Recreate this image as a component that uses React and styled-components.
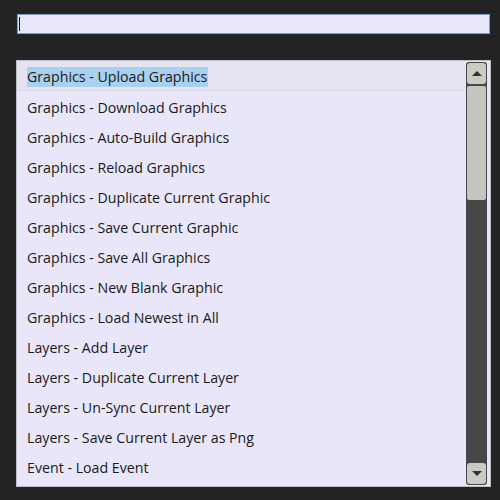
import React from "react";
import styled, { createGlobalStyle } from "styled-components";

const GlobalStyle = createGlobalStyle`
  html, body {
    margin: 0;
    padding: 0;
    background: #232323;
  }
  * {
    box-sizing: border-box;
  }
`;

const commands = [
  "Graphics - Upload Graphics",
  "Graphics - Download Graphics",
  "Graphics - Auto-Build Graphics",
  "Graphics - Reload Graphics",
  "Graphics - Duplicate Current Graphic",
  "Graphics - Save Current Graphic",
  "Graphics - Save All Graphics",
  "Graphics - New Blank Graphic",
  "Graphics - Load Newest in All",
  "Layers - Add Layer",
  "Layers - Duplicate Current Layer",
  "Layers - Un-Sync Current Layer",
  "Layers - Save Current Layer as Png",
  "Event - Load Event",
];

const App = () => {
  return (
    <>
      <GlobalStyle />
      <Page>
        <SearchBox>
          <Caret />
        </SearchBox>
        <ListBox>
          <Items>
            {commands.map((item, i) => (
              <Row key={item} $active={i === 0}>
                {i === 0 ? <Selected>{item}</Selected> : item}
              </Row>
            ))}
          </Items>
          <ScrollTrack>
            <ScrollButton>
              <Arrow />
            </ScrollButton>
            <Thumb />
            <Spacer />
            <ScrollButton>
              <Arrow $down />
            </ScrollButton>
          </ScrollTrack>
        </ListBox>
      </Page>
    </>
  );
};

const Page = styled.div`
  width: 500px;
  height: 500px;
  padding: 13px 9px 0 16px;
  display: flex;
  flex-direction: column;
  gap: 25px;
  font-family: "Open Sans", "Noto Sans", sans-serif;
`;

const SearchBox = styled.div`
  height: 22px;
  width: 475px;
  background: #e8e8fa;
  border: 1px solid #1a2a3c;
  box-shadow: inset 0 0 0 1px #7f9cc6;
  display: flex;
  align-items: center;
  padding-left: 2px;
`;

const Caret = styled.div`
  width: 1px;
  height: 14px;
  background: #111;
`;

const ListBox = styled.div`
  width: 475px;
  height: 427px;
  background: #e8e6f8;
  border: 1px solid #bdbdc6;
  display: flex;
  overflow: hidden;
`;

const Items = styled.div`
  flex: 1;
  display: flex;
  flex-direction: column;
  overflow: hidden;
`;

const Row = styled.div`
  flex: 0 0 30px;
  height: 30px;
  padding: 3px 0 0 10px;
  display: flex;
  align-items: center;
  font-size: 14.2px;
  color: #1a1a1a;
  white-space: nowrap;
  background: ${(p) => (p.$active ? "#e4e4f1" : "transparent")};
  border-bottom: ${(p) => (p.$active ? "1px solid #d6d6e0" : "none")};
`;

const Selected = styled.span`
  background: #a9d0ee;
  padding: 0 1px 0 0;
  line-height: 20px;
`;

const ScrollTrack = styled.div`
  width: 21px;
  margin: 1px 3px 1px 1px;
  background: #474747;
  border-radius: 3px;
  display: flex;
  flex-direction: column;
  padding: 1px;
`;

const ScrollButton = styled.div`
  height: 21px;
  background: #cbcbc6;
  border-radius: 3px;
  display: flex;
  align-items: center;
  justify-content: center;
`;

const Arrow = styled.div`
  width: 0;
  height: 0;
  border-left: 5px solid transparent;
  border-right: 5px solid transparent;
  ${(p) =>
    p.$down
      ? "border-top: 5px solid #333;"
      : "border-bottom: 5px solid #333;"}
`;

const Thumb = styled.div`
  height: 114px;
  margin-top: 2px;
  background: #c4c4c0;
  border-radius: 2px;
`;

const Spacer = styled.div`
  flex: 1;
`;

export default App;
